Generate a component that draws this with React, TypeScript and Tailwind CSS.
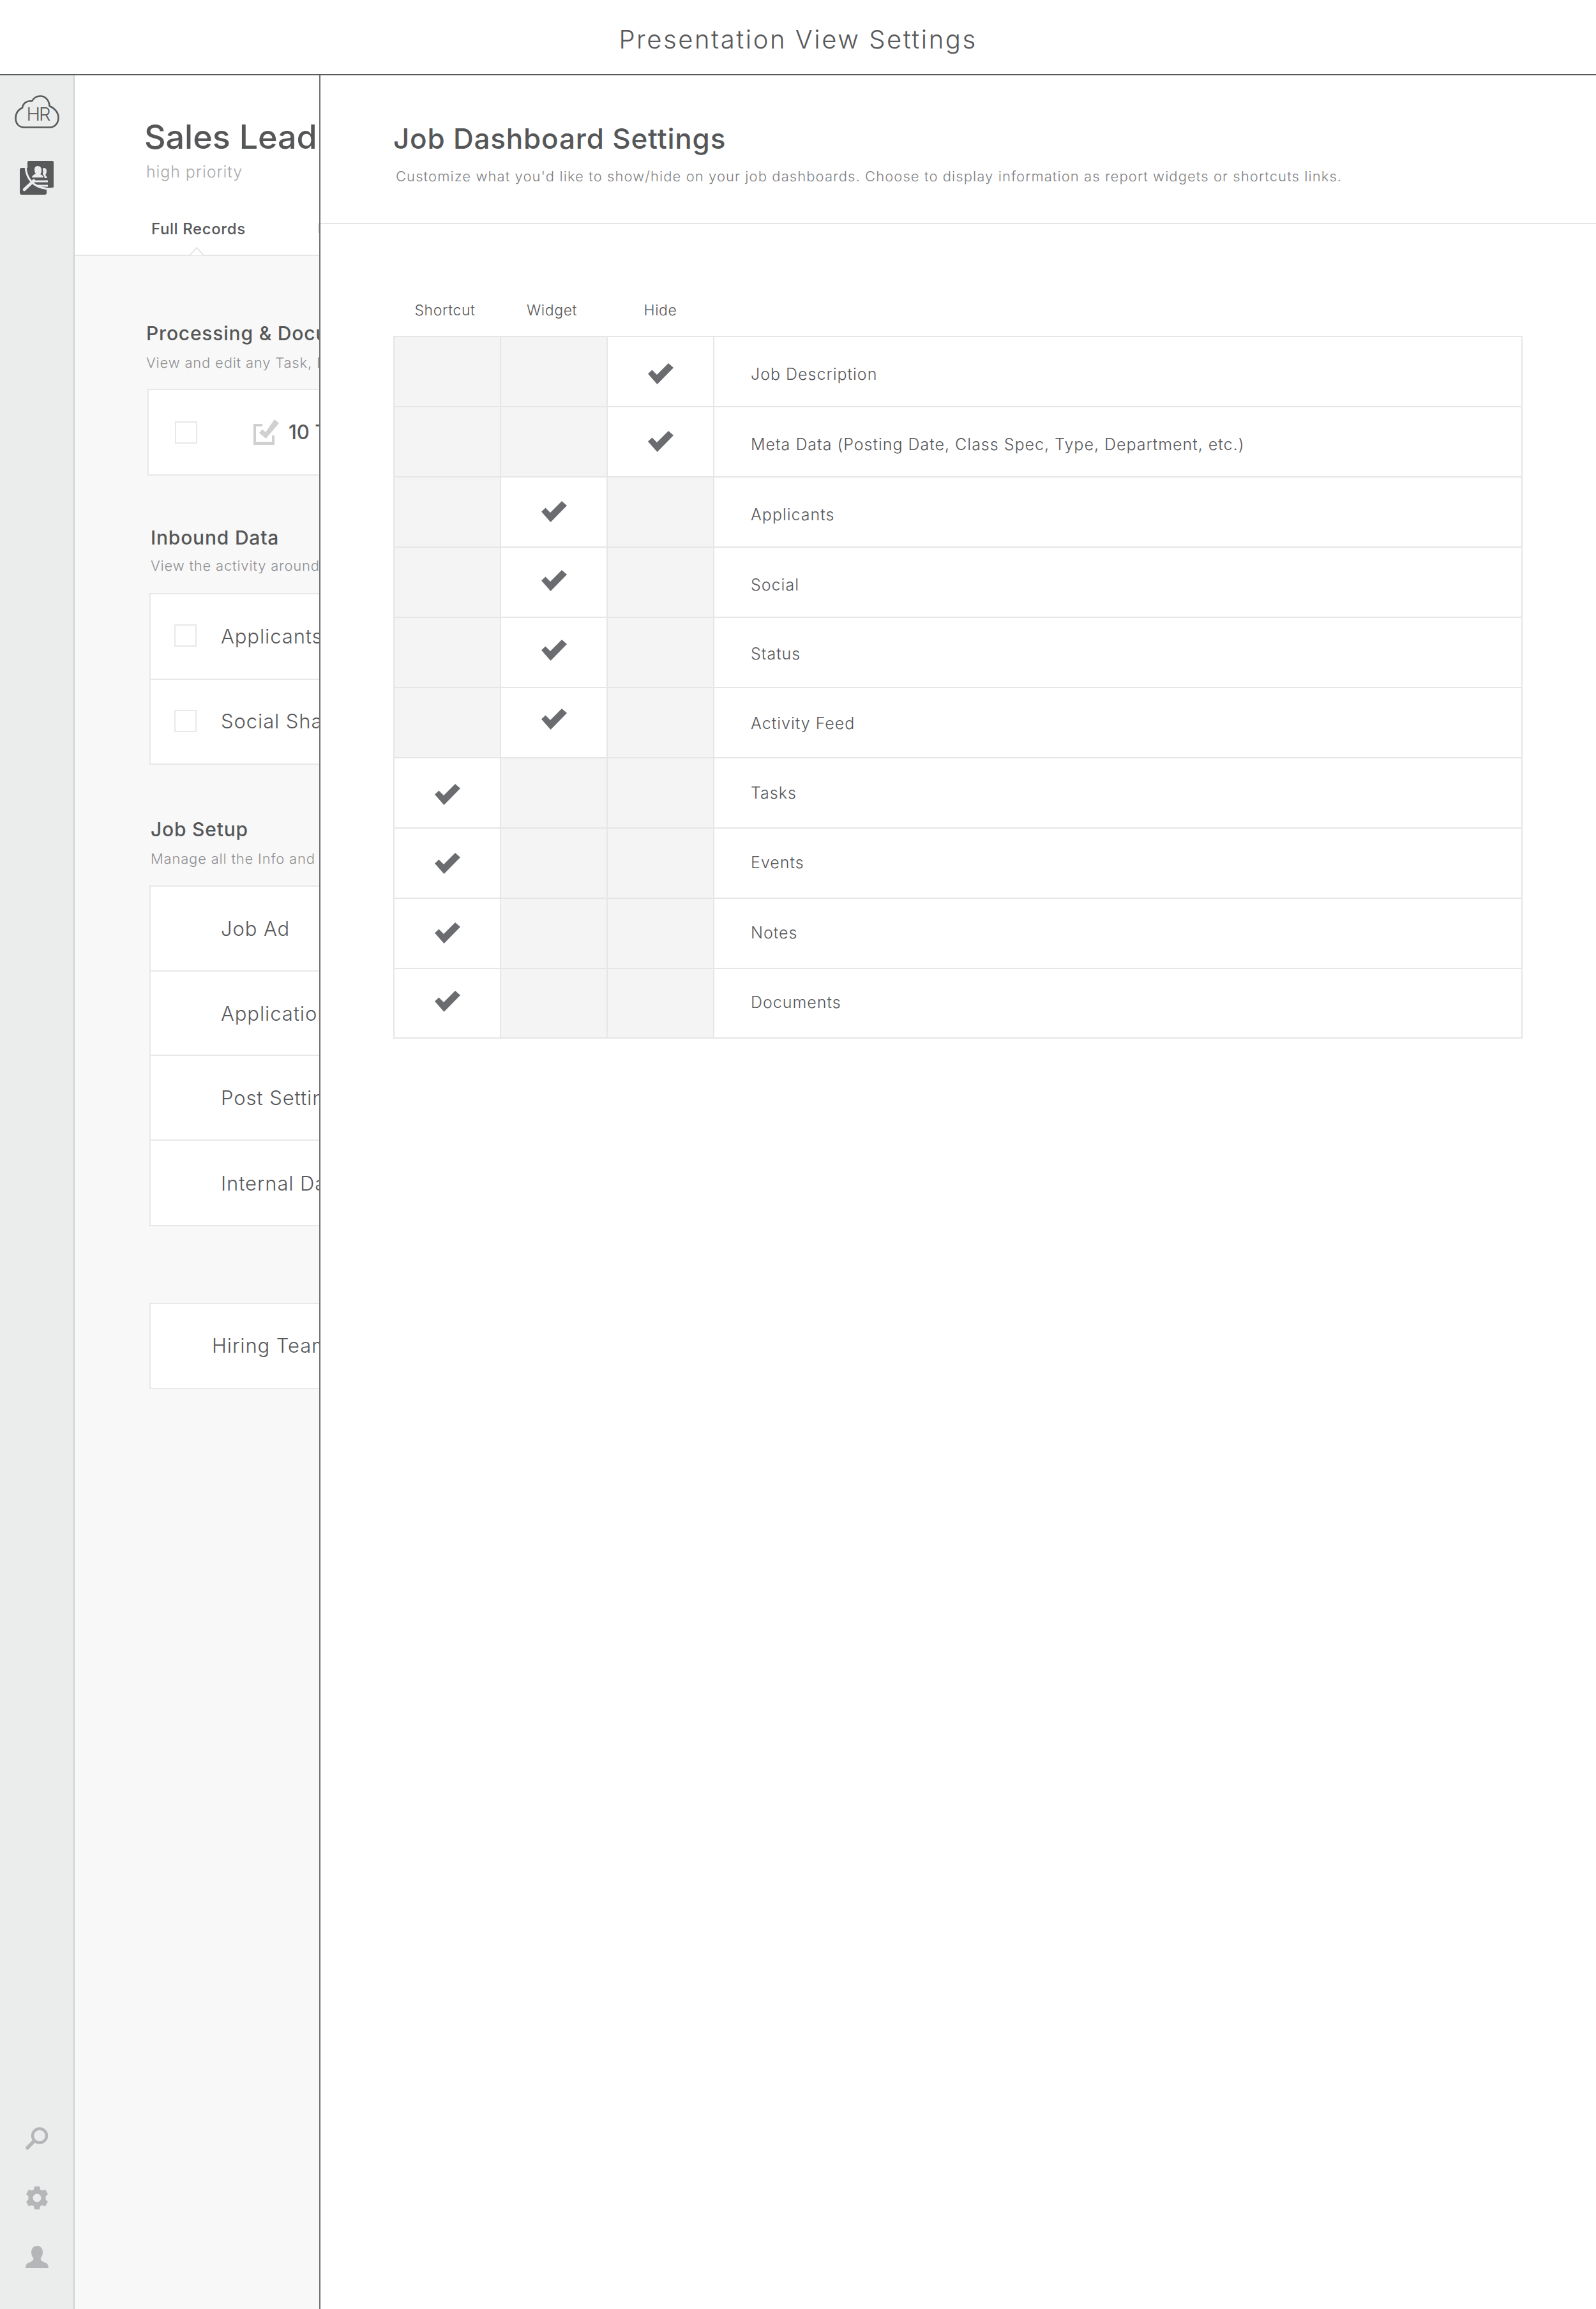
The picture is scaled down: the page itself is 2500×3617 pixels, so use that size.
const font = "font-['Inter','Liberation_Sans',sans-serif]";

const rows = [
  { label: "Job Description", on: 2, nudge: "translate-y-[3px]", text: "pt-[10px]" },
  { label: "Meta Data (Posting Date, Class Spec, Type, Department, etc.)", on: 2, nudge: "-translate-y-[1px]", text: "pt-[10px]" },
  { label: "Applicants", on: 1, nudge: "-translate-y-[1px]", text: "pt-[10px]" },
  { label: "Social", on: 1, nudge: "-translate-y-[3px]", text: "pt-[9px]" },
  { label: "Status", on: 1, nudge: "-translate-y-[4px]", text: "pt-[6px]" },
  { label: "Activity Feed", on: 1, nudge: "-translate-y-[6px]", text: "pt-[4px]" },
  { label: "Tasks", on: 0, nudge: "translate-y-[2px]", text: "pt-[2px]" },
  { label: "Events", on: 0, nudge: "", text: "" },
  { label: "Notes", on: 0, nudge: "-translate-y-[1px]", text: "" },
  { label: "Documents", on: 0, nudge: "-translate-y-[3px]", text: "pb-[2px]" },
];

const Check = ({ className }: { className: string }) => (
  <svg width="40" height="33" viewBox="0 0 40 33" className={`fill-[#6b6c6f] ${className}`}>
    <path d="M0 16.5 L6.5 10.5 L14 18 L32 0 L40 7 L14.5 33 Z" />
  </svg>
);

const CloudLogo = () => (
  <svg width="70" height="52" viewBox="0 0 70 52">
    <path
      d="M15 50.5 C6 50.5 1.5 44 1.5 36 C1.5 28 6 22 12 20 C13 13 19 8 27 9.5 C30 4 35 1.5 40 1.5 C49 1.5 54 9 54.5 17 C62 20 68.5 27 68.5 35 C68.5 44 63 50.5 55 50.5 Z"
      fill="none"
      stroke="#58595b"
      strokeWidth="2.6"
      strokeLinejoin="round"
    />
    <text x="18.5" y="40" fontFamily="Inter, sans-serif" fontSize="29" fontWeight="300" fill="#58595b" letterSpacing="-2">
      HR
    </text>
  </svg>
);

const ContactsIcon = () => (
  <svg width="53" height="53" viewBox="0 0 53 53">
    <rect x="0" y="11" width="42" height="42" rx="3" fill="#58595b" />
    <rect x="12" y="0" width="41" height="43" rx="2" fill="#58595b" />
    <path d="M9 6 C9 22 16 37 34 42 C42 44 48 44.5 53 43" fill="none" stroke="#ebeded" strokeWidth="3" />
    <path d="M7 45 L22 31" fill="none" stroke="#ebeded" strokeWidth="4.5" strokeLinecap="round" />
    <path d="M20 32 H44 M26 39 H44" fill="none" stroke="#ebeded" strokeWidth="3" />
    <path d="M28 8 Q34 8 34 15 Q34 19 32 21 Q37 23 37 26 L19 26 Q19 23 25 20 Q23 18 23 14 Q23 8 28 8 Z" fill="#ebeded" />
    <path d="M37 11 Q42 11 42 16 Q42 20 40 22 Q42 24 43 27 L39 27 Q38 23 36 21 Q37 17 36 12 Z" fill="#ebeded" />
  </svg>
);

const SearchIcon = () => (
  <svg width="36" height="36" viewBox="0 0 36 36" fill="none" stroke="#b4b6b8">
    <circle cx="22" cy="13.5" r="11" strokeWidth="4.5" />
    <path d="M13.5 22 L3 32.5" strokeWidth="5.5" strokeLinecap="round" />
  </svg>
);

const GearIcon = () => (
  <svg width="34" height="36" viewBox="0 0 34 36">
    <path
      fillRule="evenodd"
      fill="#b4b6b8"
      d="M13 0 H21 L22 5 L25 6.5 L30 5 L34 12 L30.5 15.5 V20.5 L34 24 L30 31 L25 29.5 L22 31 L21 36 H13 L12 31 L9 29.5 L4 31 L0 24 L3.5 20.5 V15.5 L0 12 L4 5 L9 6.5 L12 5 Z M17 11.5 A6.5 6.5 0 1 0 17 24.5 A6.5 6.5 0 1 0 17 11.5 Z"
    />
  </svg>
);

const PersonIcon = () => (
  <svg width="36" height="35" viewBox="0 0 36 35">
    <path
      fill="#b4b6b8"
      d="M18 0 C24 0 27 5 27 10 C27 15 24.5 18 23.5 20 C23.5 23 27 25 31 26.5 C34 27.5 36 30 36 35 H0 C0 30 2 27.5 5 26.5 C9 25 12.5 23 12.5 20 C11.5 18 9 15 9 10 C9 5 12 0 18 0 Z"
    />
  </svg>
);

const TaskIcon = () => (
  <svg width="40" height="40" viewBox="0 0 40 40" className="shrink-0">
    <path d="M0 7 H14 V11 H4 V35 H29 V25 H33 V40 H0 Z" fill="#cfd0d2" />
    <path d="M9 21 L14 15.5 L19 20 L33 0 L40 6 L19.5 30 Z" fill="#cfd0d2" />
  </svg>
);

const Box = () => <div className="w-[35px] h-[35px] shrink-0 border-2 border-[#e8e8e8] bg-white" />;

const Sidebar = () => (
  <aside className="w-[117px] shrink-0 bg-[#ebeded] border-r-2 border-[#d0d1d1] flex flex-col items-center justify-between pt-[31px] pb-[64px]">
    <div className="flex flex-col items-center gap-[51px]">
      <CloudLogo />
      <ContactsIcon />
    </div>
    <div className="flex flex-col items-center gap-[57px]">
      <SearchIcon />
      <GearIcon />
      <PersonIcon />
    </div>
  </aside>
);

const SectionHead = ({ title, sub, className, gap }: { title: string; sub: string; className: string; gap: string }) => (
  <div className={className}>
    <h2 className="text-[30px] leading-[34px] font-medium text-[#555657] whitespace-nowrap tracking-[0.8px]">{title}</h2>
    <p className={`${gap} text-[22px] leading-[24px] font-light text-[#8e8f91] whitespace-nowrap tracking-[0.8px]`}>{sub}</p>
  </div>
);

const ListRow = ({ label, box, h = "h-[132.5px]", x = "pl-[110px]", text = "" }: { label: string; box?: boolean; h?: string; x?: string; text?: string }) => (
  <div className={`${h} ${x} ${text} flex items-center whitespace-nowrap border-b-2 border-[#e8e8e8] last:border-b-0 text-[31px] font-light text-[#58595b] tracking-[0.9px] relative`}>
    {box && (
      <span className="absolute left-[37px] top-[47px]">
        <Box />
      </span>
    )}
    {label}
  </div>
);

const LeftPanel = () => (
  <section className="w-[383px] shrink-0 bg-[#f8f8f8] overflow-hidden">
    <div className="bg-white h-[283px] border-b-2 border-[#e4e5e5] relative pl-[109px] pt-[65px]">
      <h1 className="text-[52px] leading-[64px] font-medium text-[#555657] whitespace-nowrap">Sales Lead</h1>
      <p className="mt-[7px] ml-[3px] text-[25px] leading-[30px] font-light text-[#a9aaac] tracking-[0.9px]">high priority</p>
      <p className="mt-[61px] ml-[11px] text-[24px] leading-[28px] font-medium text-[#58595b] tracking-[0.6px]">Full Records</p>
      <svg width="24" height="14" viewBox="0 0 24 14" className="absolute left-[179px] bottom-[-2px]">
        <path d="M1 13 L12 1 L23 13" fill="white" stroke="#e4e5e5" strokeWidth="2" />
      </svg>
      <span className="absolute right-0 top-[232px] w-[2px] h-[15px] bg-[#dedede]" />
    </div>

    <SectionHead className="ml-[112px] mt-[104px]" gap="mt-[17px]" title="Processing & Documents" sub="View and edit any Task, Event, Note" />
    <div className="ml-[114px] mt-[29px] h-[136px] w-[500px] bg-white border-2 border-[#e8e8e8] flex items-center relative pl-[164px]">
      <span className="absolute left-[41px] top-[49px]">
        <Box />
      </span>
      <TaskIcon />
      <span className="ml-[15px] text-[31px] font-medium text-[#58595b] whitespace-nowrap">10 Tasks</span>
    </div>

    <SectionHead className="ml-[119px] mt-[80px]" gap="mt-[15px]" title="Inbound Data" sub="View the activity around this job" />
    <div className="ml-[117px] mt-[31px] w-[500px] bg-white border-2 border-[#e8e8e8]">
      <ListRow label="Applicants" box h="h-[134px]" />
      <ListRow label="Social Shares" box h="h-[131px]" />
    </div>

    <SectionHead className="ml-[119px] mt-[84px]" gap="mt-[17px]" title="Job Setup" sub="Manage all the Info and settings" />
    <div className="ml-[117px] mt-[30px] w-[500px] bg-white border-2 border-[#e8e8e8]">
      <ListRow label="Job Ad" text="pt-[2px]" />
      <ListRow label="Application Form" text="pt-[2px]" />
      <ListRow label="Post Settings" text="pt-[2px]" />
      <ListRow label="Internal Data" text="pt-[2px]" />
    </div>

    <div className="ml-[117px] mt-[120px] w-[500px] bg-white border-2 border-[#e8e8e8]">
      <ListRow label="Hiring Team" x="pl-[96px]" h="h-[131px]" />
    </div>
  </section>
);

const SettingsTable = () => (
  <div className="w-[1769px] h-[1101px] grid grid-rows-[repeat(9,110px)_1fr] border-2 border-[#e6e6e6] bg-white">
    {rows.map((row) => (
      <div key={row.label} className="flex border-b-2 border-[#e6e6e6] last:border-b-0">
        {[0, 1, 2].map((col) => (
          <div
            key={col}
            className={`w-[167px] shrink-0 border-r-2 border-[#e6e6e6] flex items-center justify-center ${row.on === col ? "bg-white" : "bg-[#f4f4f4]"}`}
          >
            {row.on === col && <Check className={row.nudge} />}
          </div>
        ))}
        <div className={`flex items-center pl-[57px] text-[25px] font-light text-[#58595b] tracking-[1px] whitespace-nowrap ${row.text}`}>
          {row.label}
        </div>
      </div>
    ))}
  </div>
);

const RightPanel = () => (
  <section className="flex-1 min-w-0 bg-white border-l-2 border-[#6f7071]">
    <div className="h-[233px] border-b-2 border-[#e6e6e6] pl-[114px] pt-[72px]">
      <h2 className="text-[44px] leading-[54px] font-medium text-[#555657] whitespace-nowrap tracking-[0.8px]">Job Dashboard Settings</h2>
      <p className="mt-[18px] ml-[4px] text-[22px] leading-[28px] font-light text-[#808183] tracking-[1.08px] whitespace-nowrap">
        Customize what you'd like to show/hide on your job dashboards. Choose to display information as report widgets or shortcuts links.
      </p>
    </div>
    <div className="pl-[114px]">
      <div className="flex h-[175px] items-end pb-[26px] text-[23px] leading-[28px] font-light text-[#58595b] tracking-[0.6px]">
        <span className="w-[162px] text-center">Shortcut</span>
        <span className="w-[173px] text-center">Widget</span>
        <span className="w-[167px] text-center">Hide</span>
      </div>
      <SettingsTable />
    </div>
  </section>
);

export default function App() {
  return (
    <div className={`w-[2500px] h-[3617px] flex flex-col bg-white ${font}`}>
      <header className="h-[118px] shrink-0 border-b-2 border-[#5a5b5c] flex items-center justify-center pt-[7px] text-[40px] font-light text-[#58595b] tracking-[2.55px]">
        Presentation View Settings
      </header>
      <main className="flex-1 min-h-0 flex">
        <Sidebar />
        <LeftPanel />
        <RightPanel />
      </main>
    </div>
  );
}
